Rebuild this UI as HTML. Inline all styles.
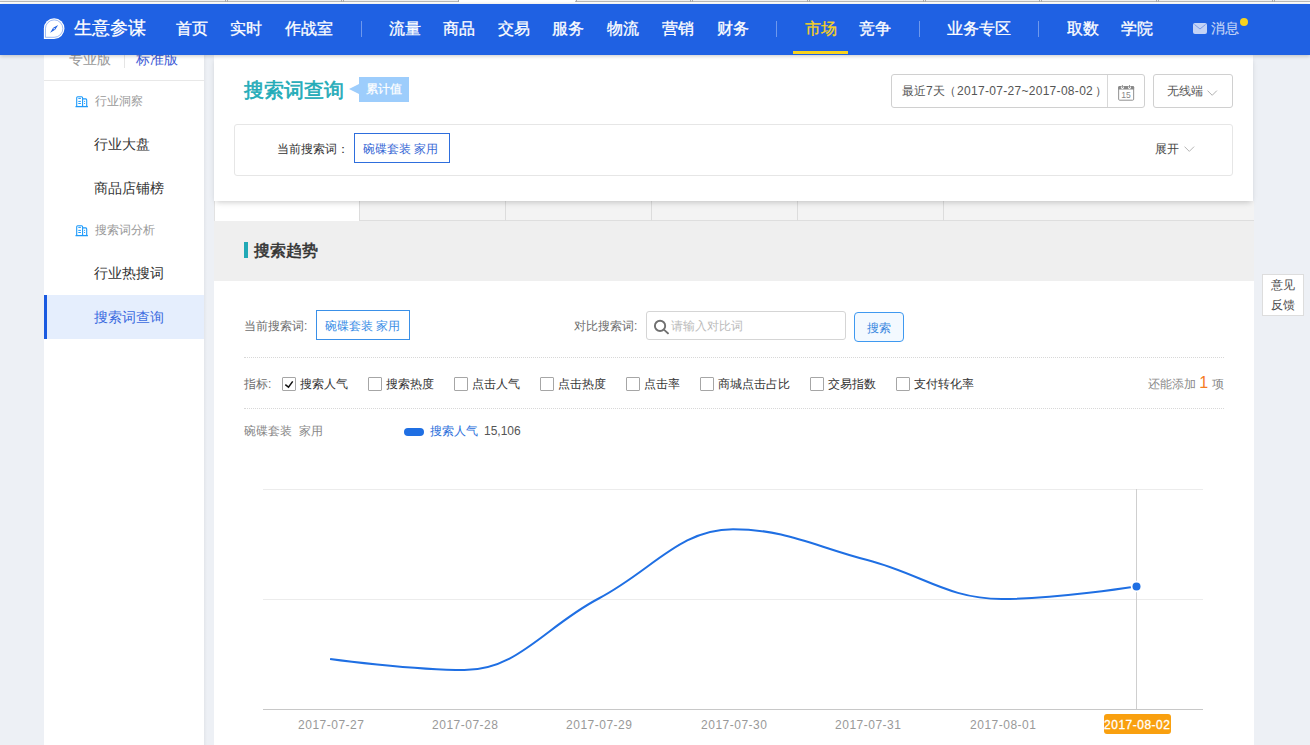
<!DOCTYPE html>
<html><head><meta charset="utf-8">
<style>
*{margin:0;padding:0;box-sizing:border-box}
html,body{width:1310px;height:745px;overflow:hidden;background:#edf0f5;font-family:"Liberation Sans",sans-serif;position:relative}
.a{position:absolute;white-space:nowrap}
#tabs{position:absolute;left:0;top:0;width:1310px;height:4px;background:#fff}
#nav{position:absolute;left:0;top:4px;width:1310px;height:51px;background:#1f61e3;box-shadow:0 1px 4px rgba(0,0,0,.22);z-index:5}
.nv{position:absolute;top:14px;font-size:16px;line-height:22px;color:#fff;-webkit-text-stroke:.3px}
.sep{position:absolute;top:17px;width:1px;height:16px;background:rgba(255,255,255,.35)}
#side{position:absolute;left:44px;top:55px;width:160px;height:690px;background:#fff}
.sh{position:absolute;font-size:12px;color:#999;line-height:16px}
.si{position:absolute;left:50px;font-size:14px;color:#333;line-height:20px}
#card{position:absolute;left:214px;top:55px;width:1039px;height:146px;background:#fff;box-shadow:0 3px 6px -2px rgba(0,0,0,.22);z-index:3}
#main{position:absolute;left:214px;top:201px;width:1040px;height:544px;background:#fff}
.t12{font-size:12px;line-height:16px}
.cb{position:absolute;top:377px;width:14px;height:14px;border:1px solid #a6a6a6;border-radius:1px;background:#fff}
.cl{position:absolute;top:376px;font-size:12px;line-height:16px;color:#333}
.xl{position:absolute;top:717px;font-size:12px;line-height:16px;color:#999;width:80px;text-align:center;letter-spacing:.5px;text-indent:.5px}
</style></head><body>
<div id="tabs">
  <div class="a" style="left:0;top:0;width:1310px;height:1px;background:#eeeeee"></div>
  <div class="a" style="left:0;top:1px;width:1310px;height:1px;background:#b9b9b9"></div>
  <div class="a" style="left:459px;top:0;width:116px;height:2px;background:#fff"></div>
  <div class="a" style="left:225px;top:0;width:1px;height:2px;background:#aaa"></div><div class="a" style="left:227px;top:0;width:1px;height:2px;background:#aaa"></div>
  <div class="a" style="left:341px;top:0;width:1px;height:2px;background:#aaa"></div><div class="a" style="left:343px;top:0;width:1px;height:2px;background:#aaa"></div>
  <div class="a" style="left:458px;top:0;width:1px;height:2px;background:#aaa"></div>
  <div class="a" style="left:576px;top:0;width:1px;height:2px;background:#aaa"></div>
  <div class="a" style="left:690px;top:0;width:1px;height:2px;background:#aaa"></div><div class="a" style="left:692px;top:0;width:1px;height:2px;background:#aaa"></div>
  <div class="a" style="left:807px;top:0;width:1px;height:2px;background:#aaa"></div><div class="a" style="left:809px;top:0;width:1px;height:2px;background:#aaa"></div>
  <div class="a" style="left:923px;top:0;width:1px;height:2px;background:#aaa"></div><div class="a" style="left:925px;top:0;width:1px;height:2px;background:#aaa"></div>
  <div class="a" style="left:1039px;top:0;width:1px;height:2px;background:#aaa"></div><div class="a" style="left:1041px;top:0;width:1px;height:2px;background:#aaa"></div>
  <div class="a" style="left:1156px;top:0;width:1px;height:2px;background:#aaa"></div><div class="a" style="left:1158px;top:0;width:1px;height:2px;background:#aaa"></div>
  <div class="a" style="left:1272px;top:0;width:1px;height:2px;background:#aaa"></div><div class="a" style="left:1274px;top:0;width:1px;height:2px;background:#aaa"></div>
</div>
<div id="nav">
  <svg class="a" style="left:41px;top:11px" width="26" height="26" viewBox="0 0 26 26">
    <path d="M2.85 23.9 V13.6 A10.3 10.3 0 1 1 13.15 23.9 Z" fill="#fff"/>
    <path d="M4.45 22.3 V13.6 A8.7 8.7 0 1 1 13.15 22.3 Z" fill="none" stroke="#1f61e3" stroke-opacity=".55" stroke-width=".8"/>
    <path d="M9.1 17.8 L12.17 12.8 L17.1 9.9 L14.13 14.8 Z" fill="#1f61e3"/>
    <circle cx="13.15" cy="13.8" r=".7" fill="#fff"/>
  </svg>
  <div class="nv" style="left:74px;top:12px;font-size:18px;line-height:24px">生意参谋</div>
  <div class="nv" style="left:176px">首页</div>
  <div class="nv" style="left:230px">实时</div>
  <div class="nv" style="left:285px">作战室</div>
  <div class="sep" style="left:361px"></div>
  <div class="nv" style="left:389px">流量</div>
  <div class="nv" style="left:443px">商品</div>
  <div class="nv" style="left:498px">交易</div>
  <div class="nv" style="left:552px">服务</div>
  <div class="nv" style="left:607px">物流</div>
  <div class="nv" style="left:662px">营销</div>
  <div class="nv" style="left:717px">财务</div>
  <div class="sep" style="left:776px"></div>
  <div class="nv" style="left:805px;color:#f7d21e">市场</div>
  <div class="a" style="left:793px;top:47px;width:55px;height:3px;background:#f7d21e"></div>
  <div class="nv" style="left:859px">竞争</div>
  <div class="sep" style="left:919px"></div>
  <div class="nv" style="left:947px">业务专区</div>
  <div class="sep" style="left:1038px"></div>
  <div class="nv" style="left:1067px">取数</div>
  <div class="nv" style="left:1121px">学院</div>
  <svg class="a" style="left:1193px;top:19px" width="14" height="11" viewBox="0 0 14 11">
    <rect x="0" y="0" width="14" height="11" rx="2" fill="#c3d3f6"/>
    <path d="M1.5 1.5 L7 6 L12.5 1.5" fill="none" stroke="#7c9de9" stroke-width="1"/>
  </svg>
  <div class="nv" style="left:1211px;font-size:14px;top:14px;line-height:20px;color:#c8d7f7;-webkit-text-stroke:.15px">消息</div>
  <div class="a" style="left:1240px;top:14px;width:8px;height:8px;border-radius:50%;background:#f6d21f"></div>
</div>

<div id="side">
  <div class="a" style="left:25px;top:-6px;font-size:14px;line-height:20px;color:#999">专业版</div>
  <div class="a" style="left:80px;top:0;width:1px;height:13px;background:#e5e5e5"></div>
  <div class="a" style="left:92px;top:-6px;font-size:14px;line-height:20px;color:#3d5bd6">标准版</div>
  <div class="a" style="left:0;top:25px;width:160px;height:1px;background:#e8e8e8"></div>
  <svg class="a" style="left:28px;top:37px" width="20" height="18" viewBox="0 0 20 18">
    <path d="M4.7 14.5 V5.8 Q4.7 4.8 5.7 4.8 H9.6 Q10.6 4.8 10.6 5.8 V14.5 M10.6 6.9 H13.7 Q14.7 6.9 14.7 7.9 V14.5" fill="none" stroke="#1e9afa" stroke-width="1.1"/>
    <path d="M3.5 14.6 H15.9" stroke="#1e9afa" stroke-width="1.3"/>
    <path d="M6.3 6.4 H8.9 M6.3 9.4 H8.9 M6.3 11.5 H8.9 M12.1 9.4 H13.1 M12.1 11.5 H13.1" stroke="#1e9afa" stroke-width="1"/>
  </svg>
  <div class="sh" style="left:51px;top:38px">行业洞察</div>
  <div class="si" style="top:79px">行业大盘</div>
  <div class="si" style="top:123px">商品店铺榜</div>
  <svg class="a" style="left:28px;top:166px" width="20" height="18" viewBox="0 0 20 18">
    <path d="M4.7 14.5 V5.8 Q4.7 4.8 5.7 4.8 H9.6 Q10.6 4.8 10.6 5.8 V14.5 M10.6 6.9 H13.7 Q14.7 6.9 14.7 7.9 V14.5" fill="none" stroke="#1e9afa" stroke-width="1.1"/>
    <path d="M3.5 14.6 H15.9" stroke="#1e9afa" stroke-width="1.3"/>
    <path d="M6.3 6.4 H8.9 M6.3 9.4 H8.9 M6.3 11.5 H8.9 M12.1 9.4 H13.1 M12.1 11.5 H13.1" stroke="#1e9afa" stroke-width="1"/>
  </svg>
  <div class="sh" style="left:51px;top:167px">搜索词分析</div>
  <div class="si" style="top:208px">行业热搜词</div>
  <div class="a" style="left:0;top:240px;width:160px;height:44px;background:#e5eefd"></div>
  <div class="a" style="left:0;top:240px;width:3px;height:44px;background:#1a5ae0"></div>
  <div class="si" style="top:252px;color:#3b6be0">搜索词查询</div>
</div>

<div class="a" style="left:204px;top:55px;width:3px;height:690px;background:linear-gradient(to right,rgba(0,0,0,.045),rgba(0,0,0,0))"></div>
<div id="card">
  <div class="a" style="left:30px;top:21px;font-size:20px;line-height:28px;color:#22abb8;-webkit-text-stroke:.6px">搜索词查询</div>
  <div class="a" style="left:135px;top:29px;width:0;height:0;border-top:5px solid transparent;border-bottom:5px solid transparent;border-right:10px solid #9dcdfc"></div>
  <div class="a" style="left:145px;top:22px;width:50px;height:25px;background:#9dcdfc"></div>
  <div class="a t12" style="left:152px;top:26px;color:#fff;-webkit-text-stroke:.25px">累计值</div>
  <!-- date -->
  <div class="a" style="left:677px;top:19px;width:254px;height:34px;border:1px solid #d0d0d0;border-radius:3px"></div>
  <div class="a" style="left:893px;top:20px;width:1px;height:32px;background:#d8d8d8"></div>
  <div class="a t12" style="left:688px;top:28px;color:#555">最近7天</div><div class="a t12" style="left:730px;top:28px;color:#555">（</div><div class="a t12" style="left:743px;top:28px;color:#555;letter-spacing:.3px">2017-07-27~2017-08-02</div><div class="a t12" style="left:881px;top:28px;color:#555">）</div>
  <svg class="a" style="left:896px;top:25px" width="30" height="26" viewBox="0 0 30 26">
    <rect x="8.65" y="6.6" width="15" height="13.6" rx="1" fill="none" stroke="#8a8a8a" stroke-width=".95"/>
    <path d="M8.2 9.6 V7.3 Q8.2 6.1 9.4 6.1 H22.9 Q24.1 6.1 24.1 7.3 V9.6 Z" fill="#8a8a8a"/>
    <circle cx="12.4" cy="7.6" r="1.45" fill="#fff"/>
    <circle cx="19.5" cy="7.6" r="1.45" fill="#fff"/>
    <path d="M12.4 5 V8 M19.5 5 V8" stroke="#8a8a8a" stroke-width=".9"/>
    <text x="16" y="18.2" font-size="8.6" text-anchor="middle" fill="#888" font-family="Liberation Sans">15</text>
  </svg>
  <div class="a" style="left:939px;top:19px;width:80px;height:34px;border:1px solid #d0d0d0;border-radius:3px"></div>
  <div class="a t12" style="left:953px;top:28px;color:#555">无线端</div>
  <svg class="a" style="left:993px;top:35px" width="11" height="7" viewBox="0 0 11 7"><path d="M0.5 0.6 L5.2 5.3 L9.9 0.6" fill="none" stroke="#b0b0b0" stroke-width="1"/></svg>
  <!-- filter -->
  <div class="a" style="left:20px;top:69px;width:999px;height:52px;border:1px solid #e6e6e6;border-radius:3px"></div>
  <div class="a t12" style="left:63px;top:86px;color:#333">当前搜索词：</div>
  <div class="a" style="left:140px;top:78px;width:96px;height:30px;border:1px solid #2e6edd"></div>
  <div class="a t12" style="left:149px;top:86px;color:#3768d5">碗碟套装 家用</div>
  <div class="a t12" style="left:941px;top:86px;color:#444">展开</div>
  <svg class="a" style="left:970px;top:91px" width="11" height="7" viewBox="0 0 11 7"><path d="M0.5 0.6 L5.3 5.4 L10.1 0.6" fill="none" stroke="#b5b5b5" stroke-width="1"/></svg>
</div>

<div id="main">
  <!-- tab strip -->
  <div class="a" style="left:0;top:0;width:1px;height:20px;background:#e2e2e2"></div>
  <div class="a" style="left:145px;top:0;width:895px;height:20px;background:#f3f3f3;border-bottom:1px solid #dedede"></div>
  <div class="a" style="left:145px;top:0;width:1px;height:20px;background:#dcdcdc"></div>
  <div class="a" style="left:291px;top:0;width:1px;height:20px;background:#dcdcdc"></div>
  <div class="a" style="left:437px;top:0;width:1px;height:20px;background:#dcdcdc"></div>
  <div class="a" style="left:583px;top:0;width:1px;height:20px;background:#dcdcdc"></div>
  <div class="a" style="left:729px;top:0;width:1px;height:20px;background:#dcdcdc"></div>
  <!-- header -->
  <div class="a" style="left:0;top:20px;width:1040px;height:60px;background:#efefef"></div>
  <div class="a" style="left:30px;top:41px;width:4px;height:16px;background:#21a9b6"></div>
  <div class="a" style="left:40px;top:39px;font-size:16px;line-height:22px;color:#333;-webkit-text-stroke:.55px">搜索趋势</div>
</div>

<!-- content (page coords) -->
<div class="a t12" style="left:244px;top:318px;color:#6e6e6e">当前搜索词:</div>
<div class="a" style="left:316px;top:310px;width:94px;height:30px;border:1px solid #3a90e8"></div>
<div class="a t12" style="left:325px;top:318px;color:#3a8ee6">碗碟套装 家用</div>
<div class="a t12" style="left:574px;top:318px;color:#6e6e6e">对比搜索词:</div>
<div class="a" style="left:646px;top:311px;width:200px;height:29px;border:1px solid #d5d5d5;border-radius:3px"></div>
<svg class="a" style="left:653px;top:319px" width="16" height="16" viewBox="0 0 16 16">
  <circle cx="7.05" cy="6.9" r="5.15" fill="none" stroke="#707070" stroke-width="1.9"/>
  <path d="M10.3 11.2 L11.5 10 L16.2 14.3 L14.9 15.6 Z" fill="#707070"/>
</svg>
<div class="a t12" style="left:671px;top:318px;color:#bbb">请输入对比词</div>
<div class="a" style="left:854px;top:312px;width:50px;height:30px;border:1px solid #3f99f0;border-radius:4px;background:#f3f9ff"></div>
<div class="a t12" style="left:867px;top:320px;color:#3a88e0">搜索</div>
<div class="a" style="left:244px;top:357px;width:980px;height:1px;border-top:1px dotted #d8d8d8"></div>

<div class="a t12" style="left:244px;top:376px;color:#6e6e6e">指标:</div>
<div class="cb" style="left:282px"></div>
<svg class="a" style="left:284px;top:380px" width="11" height="9" viewBox="0 0 11 9"><path d="M1.3 4.7 L4.5 7.1 L8.7 1.35" fill="none" stroke="#111" stroke-width="1.5"/></svg>
<div class="cl" style="left:300px">搜索人气</div>
<div class="cb" style="left:368px"></div><div class="cl" style="left:386px">搜索热度</div>
<div class="cb" style="left:454px"></div><div class="cl" style="left:472px">点击人气</div>
<div class="cb" style="left:540px"></div><div class="cl" style="left:558px">点击热度</div>
<div class="cb" style="left:626px"></div><div class="cl" style="left:644px">点击率</div>
<div class="cb" style="left:700px"></div><div class="cl" style="left:718px">商城点击占比</div>
<div class="cb" style="left:810px"></div><div class="cl" style="left:828px">交易指数</div>
<div class="cb" style="left:896px"></div><div class="cl" style="left:914px">支付转化率</div>
<div class="a t12" style="left:1148px;top:375px;color:#8a8a8a">还能添加 <span style="color:#f57c22;font-size:16px">1</span> 项</div>
<div class="a" style="left:244px;top:408px;width:980px;height:1px;border-top:1px dotted #d8d8d8"></div>

<div class="a t12" style="left:244px;top:423px;color:#888">碗碟套装&nbsp; 家用</div>
<div class="a" style="left:404px;top:428px;width:20px;height:8px;border-radius:4px;background:#1f6fe3"></div>
<div class="a t12" style="left:430px;top:423px;color:#2b6fdb">搜索人气</div>
<div class="a t12" style="left:484px;top:423px;color:#555">15,106</div>

<svg class="a" style="left:0;top:0" width="1310" height="745">
  <path d="M263 489.5 H1203 M263 599.5 H1203" stroke="#ececec" stroke-width="1"/>
  <path d="M263 709.5 H1203" stroke="#c8c8c8" stroke-width="1"/>
  <path d="M1136.5 489 V709" stroke="#cfcfcf" stroke-width="1"/>
  <path d="M 330.1 659.0 C 330.1 659.0 410.7 670.0 464.4 670.0 C 518.1 670.0 545.0 626.6 598.7 598.5 C 652.4 570.4 679.3 529.3 733.0 529.3 C 786.7 529.3 813.6 546.1 867.3 560.0 C 921.0 573.9 947.9 599.0 1001.6 599.0 C 1055.3 599.0 1135.9 586.5 1135.9 586.5" fill="none" stroke="#1f6fe3" stroke-width="2"/>
  <circle cx="1136.5" cy="586.5" r="5.8" fill="#fff"/><circle cx="1136.5" cy="586.5" r="4" fill="#1f6fe3"/>
</svg>
<div class="xl" style="left:291px">2017-07-27</div>
<div class="xl" style="left:425px">2017-07-28</div>
<div class="xl" style="left:559px">2017-07-29</div>
<div class="xl" style="left:694px">2017-07-30</div>
<div class="xl" style="left:828px">2017-07-31</div>
<div class="xl" style="left:963px">2017-08-01</div>
<div class="a" style="left:1104px;top:714px;width:67px;height:20px;border-radius:3px;background:#f9a00f"></div>
<div class="xl" style="left:1097px;color:#fff;-webkit-text-stroke:.3px">2017-08-02</div>

<!-- feedback -->
<div class="a" style="left:1262px;top:274px;width:42px;height:42px;background:#fff;border:1px solid #ddd"></div>
<div class="a t12" style="left:1271px;top:277px;color:#4a4a4a">意见</div>
<div class="a t12" style="left:1271px;top:297px;color:#4a4a4a">反馈</div>
</body></html>
